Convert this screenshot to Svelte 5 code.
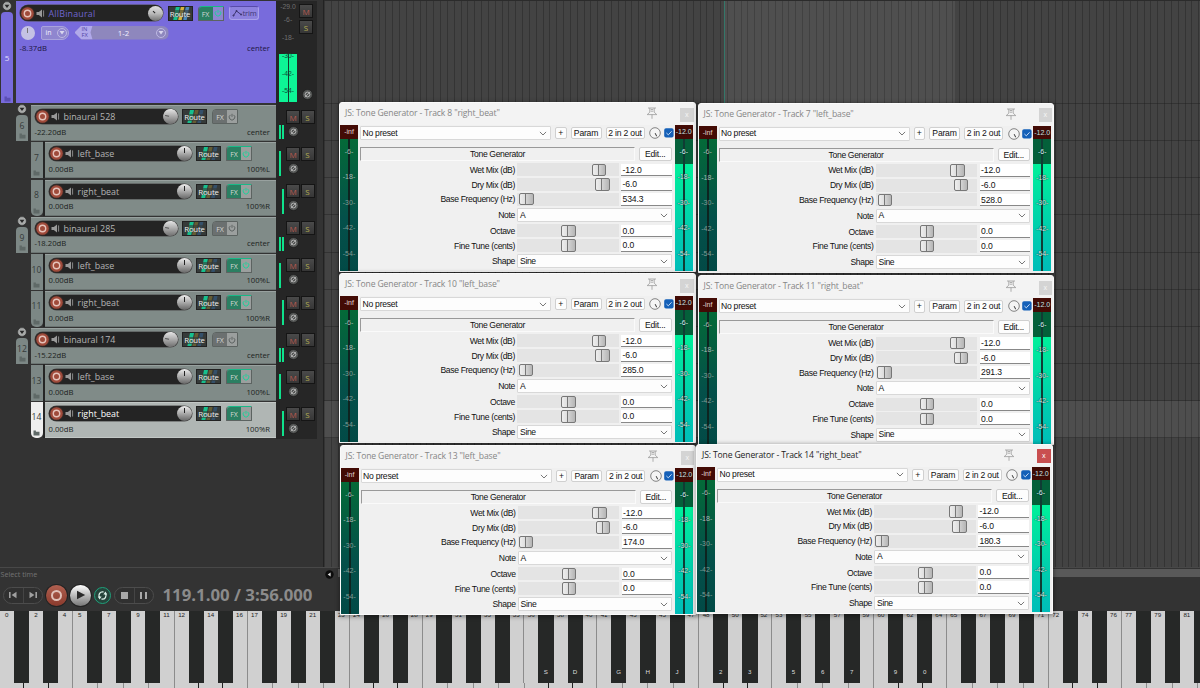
<script>
  const tracks = [
    { num: 6, name: "binaural 528", db: "-22.20dB", pan: "center", folder: true },
    { num: 7, name: "left_base", db: "0.00dB", pan: "100%L" },
    { num: 8, name: "right_beat", db: "0.00dB", pan: "100%R", last: true },
    { num: 9, name: "binaural 285", db: "-18.20dB", pan: "center", folder: true },
    { num: 10, name: "left_base", db: "0.00dB", pan: "100%L" },
    { num: 11, name: "right_beat", db: "0.00dB", pan: "100%R", last: true },
    { num: 12, name: "binaural 174", db: "-15.22dB", pan: "center", folder: true },
    { num: 13, name: "left_base", db: "0.00dB", pan: "100%L" },
    { num: 14, name: "right_beat", db: "0.00dB", pan: "100%R", last: true, selected: true }
  ];

  const windows = [
    { track: 8, name: "right_beat", freq: "534.3", knob: 9.5, x: 339, y: 102 },
    { track: 7, name: "left_base", freq: "528.0", knob: 9.5, x: 697.5, y: 102.6 },
    { track: 10, name: "left_base", freq: "285.0", knob: 9, x: 339, y: 273 },
    { track: 11, name: "right_beat", freq: "291.3", knob: 9, x: 697.5, y: 275.4 },
    { track: 13, name: "left_base", freq: "174.0", knob: 8.5, x: 339.6, y: 445 },
    { track: 14, name: "right_beat", freq: "180.3", knob: 8, x: 696, y: 443.8, active: true }
  ];

  function paramsFor(win) {
    return [
      { label: "Wet Mix (dB)", value: "-12.0", knob: 82 },
      { label: "Dry Mix (dB)", value: "-6.0", knob: 85.5 },
      { label: "Base Frequency (Hz)", value: win.freq, knob: win.knob },
      { label: "Note", option: "A" },
      { label: "Octave", value: "0.0", knob: 51.5 },
      { label: "Fine Tune (cents)", value: "0.0", knob: 51.5 },
      { label: "Shape", option: "Sine" }
    ];
  }

  const ticks = ["-6-", "-18-", "-30-", "-42-", "-54-"];

  // computer keyboard letters shown on the black keys
  const keyHints = { 37: "S", 39: "D", 42: "G", 44: "H", 46: "J", 49: "2", 51: "3", 54: "5", 56: "6", 58: "7", 61: "9", 63: "0" };
  const blackNotes = [1, 3, 6, 8, 10];
  const notes = Array.from({ length: 83 }, (_, n) => ({
    n,
    black: blackNotes.includes(n % 12),
    edge: n % 12 === 4 || n % 12 === 11
  }));
  const octaves = [0, 1, 2, 3, 4, 5, 6];
</script>

{#snippet recordArm()}
  <svg class="rec" width="15" height="15" viewBox="0 0 15 15">
    <circle cx="7.5" cy="7.5" r="7.2" fill="#3a2a27" />
    <circle cx="7.5" cy="7.5" r="6.3" fill="#a04b3b" />
    <circle cx="7.5" cy="7.5" r="3.2" fill="none" stroke="#e6c3bb" stroke-width="1.4" />
  </svg>
{/snippet}

{#snippet speaker()}
  <svg class="speaker" width="10" height="9" viewBox="0 0 10 9">
    <path d="M0.5 3h2.3L6 0.6v7.8L2.8 6H0.5z" fill="#999" />
    <path d="M7.6 1.4v6.2" stroke="#888" stroke-width="1" />
  </svg>
{/snippet}

{#snippet phase()}
  <svg class="phase" width="11" height="11" viewBox="0 0 11 11">
    <circle cx="5.5" cy="5.5" r="5" fill="#555756" stroke="#181818" stroke-width="0.6" />
    <circle cx="5.5" cy="5.5" r="2.4" fill="none" stroke="#b8b8b8" stroke-width="0.9" />
    <path d="M2.8 8.2L8.2 2.8" stroke="#b8b8b8" stroke-width="0.8" />
  </svg>
{/snippet}

{#snippet fold()}
  <svg class="fold" width="10" height="10" viewBox="0 0 10 10">
    <circle cx="5" cy="5" r="4.4" fill="#a9abaa" stroke="#2c2c2c" stroke-width="0.6" />
    <path d="M2.6 3.7h4.8L5 7z" fill="#262626" />
  </svg>
{/snippet}

{#snippet folderGlyph()}
  <svg class="folder-glyph" width="7" height="6" viewBox="0 0 7 6">
    <path d="M0.5 0.5h2.4v1.2h3.6v3.8h-6z" fill="currentColor" />
  </svg>
{/snippet}

{#snippet route(lit)}
  <div class="route">
    <svg width="25" height="15" viewBox="0 0 25 15">
      <path d="M7 0h4L8 15H4z" fill="#17c08d" />
      <path d="M12 0h3.5l-3 15H9z" fill={lit ? "#d6b43c" : "#655c33"} />
      <path d="M17 0h3.5l-3 15H14z" fill={lit ? "#4c88bb" : "#34506a"} />
      <path d="M2 4h21v7H2z" fill="#353a39" opacity="0.6" />
    </svg>
    <span>Route</span>
  </div>
{/snippet}

{#snippet fx(on)}
  <div class="fx" class:on>
    <span class="fx-text">FX</span>
    <span class="fx-power">
      <svg width="8" height="8" viewBox="0 0 8 8" fill="none" stroke="currentColor" stroke-width="1">
        <path d="M2.4 1.9a2.8 2.8 0 1 0 3.2 0M4 0.8v3" />
      </svg>
    </span>
  </div>
{/snippet}

{#snippet meter(text, lit)}
  <div class="meter" class:lit>
    <div class="peak">{text}</div>
    <div class="meter-body">
      {#each ticks as tick}
        <span>{tick}</span>
      {/each}
    </div>
  </div>
{/snippet}

{#snippet chevron()}
  <svg class="chevron" width="8" height="5" viewBox="0 0 8 5">
    <path d="M0.9 0.9L4 4L7.1 0.9" fill="none" stroke="#555" stroke-width="0.8" />
  </svg>
{/snippet}

<div class="app">
  <div class="main">
    <div class="tcp">
      <div class="master-row">
        <div class="bus-gutter">
          {@render fold()}
          <div class="bus-num"><span>5</span>{@render folderGlyph()}</div>
        </div>
        <div class="bus">
          <div class="line">
            <div class="name-pill">
              {@render recordArm()}
              {@render speaker()}
              <span class="name">AllBinaural</span>
              <i class="knob tilt"></i>
            </div>
            {@render route(true)}
            {@render fx(true)}
            <div class="trim">
              <svg width="11" height="8" viewBox="0 0 11 8" fill="none" stroke="#3e3772" stroke-width="1">
                <path d="M1.5 6.5L4.5 2L9 5.5" />
                <path d="M1 6h1v1H1zM4 1.5h1v1H4zM8.6 5h1v1h-1z" />
              </svg>
              <span>trim</span>
            </div>
          </div>
          <div class="line second">
            <i class="knob pale"></i>
            <div class="in">in <b><svg width="6" height="5" viewBox="0 0 6 5"><path d="M0.5 1h5L3 4.4z" fill="#d9d6ee" /></svg></b></div>
            <div class="infx">
              <span class="infx-tag">IN<br />FX</span>
              <span class="infx-body">1-2</span>
              <b><svg width="6" height="5" viewBox="0 0 6 5"><path d="M0.5 1h5L3 4.4z" fill="#d9d6ee" /></svg></b>
            </div>
          </div>
          <div class="values"><span>-8.37dB</span><span>center</span></div>
        </div>
        <div class="strip master-strip">
          <div class="vu">
            <span>-29.0</span><span>-6-</span><span>-18-</span>
            <div class="vu-lit"><span>-30-</span><span>-42-</span><span>-54-</span></div>
          </div>
          <div class="strip-buttons">
            <div class="ms m">M</div>
            <div class="ms s">S</div>
            {@render phase()}
          </div>
        </div>
      </div>

      {#each tracks as track}
        <div class="track" class:child={!track.folder} class:selected={track.selected}>
          <div class="gutter" class:last={track.last}>
            {#if track.folder}{@render fold()}{/if}
            <div class="num"><span>{track.num}</span>{@render folderGlyph()}</div>
          </div>
          <div class="body">
            <div class="line">
              <div class="name-pill">
                {@render recordArm()}
                {@render speaker()}
                <span class="name">{track.name}</span>
                <i class="knob" class:left={track.folder}></i>
              </div>
              {@render route(false)}
              {@render fx(!track.folder)}
            </div>
            <div class="values"><span>{track.db}</span><span>{track.pan}</span></div>
          </div>
          <div class="strip">
            <div class="bars" class:short={track.folder}>
              <i class:off={track.last}></i>
              <i class:off={!track.folder && !track.last}></i>
            </div>
            <div class="strip-grid">
              <div class="ms m">M</div>
              <div class="ms s">S</div>
              {@render phase()}
            </div>
          </div>
        </div>
      {/each}
    </div>

    <div class="arrange">
      <div class="lane first"><div class="range"></div></div>
      {#each tracks as track}
        <div class="lane" class:selected={track.selected}></div>
      {/each}
    </div>
  </div>

  <div class="transport">
    <div class="status">
      <span>Select time</span>
      <svg width="9" height="9" viewBox="0 0 9 9">
        <circle cx="4.5" cy="4.5" r="4.2" fill="#0c0c0c" />
        <path d="M5.6 2.5v4L2.7 4.5z" fill="#ddd" />
      </svg>
      <i class="scroll"></i>
    </div>
    <div class="controls">
      <div class="pair">
        <span><svg width="10" height="8" viewBox="0 0 10 8"><path d="M1 1h1.6v6H1zM8.5 0.8v6.4L3.6 4z" fill="#a0a0a0" /></svg></span>
        <span><svg width="10" height="8" viewBox="0 0 10 8"><path d="M7.4 1H9v6H7.4zM1.5 0.8v6.4L6.4 4z" fill="#a0a0a0" /></svg></span>
      </div>
      <div class="round record"><i></i></div>
      <div class="round play"><svg width="10" height="10" viewBox="0 0 10 10"><path d="M1 0.8v8.4L9.2 5z" fill="#2a2a2a" /></svg></div>
      <div class="loop">
        <svg width="11" height="11" viewBox="0 0 11 11">
          <path d="M2.5 7.6A3.7 3.7 0 0 1 6.5 2M8.5 3.4A3.7 3.7 0 0 1 4.5 9" fill="none" stroke="#d9efe7" stroke-width="1.4" />
          <path d="M0.8 6.6h3.8L2.6 9.6zM6.4 4.4h3.8L8.4 1.4z" fill="#d9efe7" />
        </svg>
      </div>
      <div class="pair">
        <span><i class="stop"></i></span>
        <span><i class="pause"></i></span>
      </div>
      <div class="time">119.1.00 / 3:56.000</div>
    </div>
  </div>

  <div class="piano">
    <div class="keys-top">
      {#each notes as note}
        <div class="key" class:black={note.black} class:edge={note.edge}>
          {#if note.black}{keyHints[note.n] ?? ""}{:else}{note.n}{/if}
        </div>
      {/each}
    </div>
    <div class="keys-bottom">
      {#each octaves as o}
        <div class="low three"></div>
        <div class="low three"></div>
        <div class="low three"></div>
        <div class="low"></div>
        <div class="low"></div>
        <div class="low"></div>
        <div class="low"></div>
      {/each}
    </div>
  </div>

  {#each windows as win}
    <div class="window" class:active={win.active} style="left: {win.x}px; top: {win.y}px">
      <div class="titlebar">
        <span class="title">JS: Tone Generator - Track {win.track} "{win.name}"</span>
        <svg class="pin" width="12" height="13" viewBox="0 0 12 13" fill="none" stroke="#9a9a9a" stroke-width="0.8">
          <path d="M2 1h8M3.8 1v4.2L1.2 7.6h9.6L8.2 5.2V1M6 7.6v4.2M4.8 2.5h2.4M4.8 4.2h2.4" />
        </svg>
        <span class="close">x</span>
      </div>
      <div class="content">
        {@render meter("-inf", false)}
        <div class="panel">
          <div class="toolbar">
            <div class="combo preset">No preset{@render chevron()}</div>
            <div class="btn plus">+</div>
            <div class="btn param">Param</div>
            <div class="btn io">2 in 2 out</div>
            <svg class="mix" width="12" height="12" viewBox="0 0 12 12" fill="none">
              <circle cx="6" cy="6" r="5.3" fill="#f5f5f5" stroke="#666" stroke-width="0.8" />
              <path d="M6.2 6.2L7.7 9.3" stroke="#333" stroke-width="1" />
            </svg>
            <svg class="check" width="10" height="10" viewBox="0 0 10 10">
              <rect x="0.2" y="0.2" width="9.4" height="9.4" rx="1.8" fill="#1460b8" />
              <path d="M2.4 5l1.9 1.8L7.6 3.3" fill="none" stroke="#d8e8fa" stroke-width="0.9" />
            </svg>
          </div>
          <div class="heading">
            <div class="effect">Tone Generator</div>
            <div class="btn edit">Edit...</div>
          </div>
          {#each paramsFor(win) as p}
            {#if p.option}
              <div class="row select-row">
                <span class="label">{p.label}</span>
                <div class="combo">{p.option}{@render chevron()}</div>
              </div>
            {:else}
              <div class="row">
                <span class="label">{p.label}</span>
                <div class="slider"><i style="margin-left: {p.knob - 7.2}px"></i></div>
                <div class="field">{p.value}</div>
              </div>
            {/if}
          {/each}
        </div>
        {@render meter("-12.0", true)}
      </div>
    </div>
  {/each}
</div>

<style>
  :global(body) {
    background: #333;
  }

  * {
    box-sizing: border-box;
  }

  .app {
    position: relative;
    width: 1200px;
    height: 688px;
    overflow: hidden;
    background: #333;
    font-family: "Open Sans", "Liberation Sans", sans-serif;
    font-size: 8px;
  }

  svg {
    display: block;
    flex: none;
  }

  .main {
    display: flex;
    height: 568px;
    border-bottom: 1px solid #484848;
  }

  .tcp {
    width: 323px;
    flex: none;
    padding-top: 1px;
  }

  .line {
    display: flex;
    align-items: center;
  }

  .master-row {
    display: flex;
    height: 103.3px;
  }

  .bus-gutter {
    width: 16px;
    padding-left: 1px;
    display: flex;
    flex-direction: column;
    align-items: flex-start;
  }

  .bus-gutter .fold {
    margin-left: 1px;
  }

  .bus-num {
    flex: 1;
    width: 12px;
    margin: 1px 0 1px;
    border-radius: 4px 4px 0 0;
    background: #786bdc;
    color: #e2ddff;
    display: flex;
    flex-direction: column;
    align-items: center;
    justify-content: flex-end;
    padding-bottom: 1px;
  }

  .bus-num span {
    margin-bottom: 33px;
  }

  .bus-num .folder-glyph {
    color: #5b4fb4;
  }

  .bus {
    width: 260px;
    height: 102px;
    background: #786bdc;
    padding: 3.5px 6px 0 3.5px;
  }

  .bus .line {
    height: 17px;
  }

  .name-pill {
    width: 144px;
    height: 16px;
    border-radius: 8px;
    background: #242424;
    display: flex;
    align-items: center;
    color: #b4b4b4;
    font-size: 8.9px;
    box-shadow: 0 0 0 0.6px #4b4b4b;
  }

  .name-pill .speaker {
    margin-left: 1.5px;
  }

  .name {
    flex: 1;
    margin-left: 2.5px;
    white-space: nowrap;
  }

  .bus .name {
    color: #6f64cf;
    letter-spacing: 0.2px;
  }

  .bus .name-pill {
    width: 143px;
    margin-right: 5px;
  }

  .knob {
    width: 15px;
    height: 15px;
    flex: none;
    border-radius: 50%;
    background: linear-gradient(#eee, #aaa 50%, #666);
    display: flex;
    justify-content: center;
  }

  .knob::after {
    content: "";
    width: 1px;
    height: 5px;
    margin-top: 2px;
    background: #222;
  }

  .knob.left {
    transform: rotate(-80deg);
    background: linear-gradient(80deg, #666, #aaa 50%, #eee);
    background: linear-gradient(100deg, #eee -60%, #aaa 50%, #666 160%);
    background: linear-gradient(260deg, #eee, #aaa 50%, #666);
    background: linear-gradient(260deg, #eee, #aaa 50%, #666);
  }

  .knob.left::after {
    height: 4px;
    background: #555;
  }

  .knob.tilt {
    transform: rotate(-45deg);
    background: linear-gradient(225deg, #eee, #bbb 50%, #555);
  }

  .knob.tilt::after {
    height: 3px;
    margin-top: 3.5px;
  }

  .knob.pale {
    width: 14px;
    height: 14px;
    background: #c5c2e4;
  }

  .knob.pale::after {
    background: #777;
  }

  .route {
    position: relative;
    width: 25px;
    height: 15px;
    background: #353a39;
    border: 0.5px solid #222;
    overflow: hidden;
  }

  .route span {
    position: absolute;
    inset: 0;
    line-height: 14px;
    text-align: center;
    color: #eee;
    font-size: 7.8px;
    letter-spacing: -0.2px;
  }

  .route svg {
    margin-top: -0.5px;
  }

  .fx {
    width: 26px;
    height: 15px;
    margin-left: 5px;
    display: flex;
    color: #d7d7d7;
    font-size: 7px;
    line-height: 15px;
    text-align: center;
    border: 0.6px solid #5c6361;
    border-radius: 4px 1px 1px 1px;
    overflow: hidden;
  }

  .fx-text {
    width: 14px;
    background: #6b7070;
  }

  .fx-power {
    flex: 1;
    background: #9b9f9e;
    color: #5e6463;
    display: flex;
    align-items: center;
    justify-content: center;
  }

  .fx.on {
    border-top: 1px solid #19b988;
  }

  .fx.on .fx-text {
    background: #2b7f62;
  }

  .fx.on .fx-power {
    color: #1fd19b;
  }

  .bus .fx-power {
    background: #8e86cf;
  }

  .trim {
    width: 30px;
    height: 14px;
    margin-left: 5px;
    border: 1px solid #aaa2ea;
    border-top-color: #574ba9;
    border-radius: 3px;
    background: #8d82de;
    color: #403873;
    font-size: 7.6px;
    letter-spacing: -0.2px;
    display: flex;
    align-items: center;
    padding-left: 2px;
  }

  .bus .second {
    height: 16px;
    margin-top: 3px;
    padding-left: 1px;
  }

  .in {
    width: 28px;
    height: 14px;
    margin-left: 6px;
    padding-left: 4px;
    border: 1px solid #a9a3dc;
    border-radius: 2px 7px 7px 2px;
    background: #8f86cf;
    color: #f0eeff;
    font-size: 7px;
    display: flex;
    align-items: center;
    justify-content: space-between;
  }

  .second b {
    width: 10px;
    height: 10px;
    margin-right: 1px;
    border: 1px solid #bdb8e2;
    border-radius: 50%;
    display: flex;
    align-items: center;
    justify-content: center;
  }

  .infx {
    width: 94px;
    height: 14px;
    margin-left: 6px;
    padding-right: 2px;
    border-radius: 0 7px 7px 0;
    background: #8e87bd;
    color: #f2f0ff;
    display: flex;
    align-items: center;
    clip-path: polygon(7px 0, 100% 0, 100% 100%, 7px 100%, 0 50%);
  }

  .infx-tag {
    width: 18px;
    height: 14px;
    padding-left: 7px;
    background: #b1a9ea;
    color: #5347a8;
    font-size: 5.8px;
    line-height: 6.6px;
    clip-path: polygon(0 0, 100% 0, 16px 50%, 100% 100%, 0 100%);
  }

  .infx-body {
    flex: 1;
    text-align: center;
    font-size: 7.8px;
    padding-right: 1px;
  }

  .values {
    display: flex;
    justify-content: space-between;
    font-size: 7.7px;
    line-height: 10px;
    color: #1c1f1e;
  }

  .bus .values {
    margin-top: 2.5px;
    color: #1d1644;
  }

  .strip {
    width: 41px;
    background: #262626;
    display: flex;
  }

  .master-strip {
    padding-left: 3px;
  }

  .vu {
    width: 18px;
    display: flex;
    flex-direction: column;
    align-items: center;
    color: #707070;
    font: 6.8px "Liberation Sans", sans-serif;
  }

  .vu span {
    line-height: 17.6px;
    white-space: nowrap;
  }

  .vu > span:first-child {
    line-height: 12px;
  }

  .vu > span:nth-child(2) {
    line-height: 14px;
  }

  .vu > span:nth-child(3) {
    line-height: 22px;
  }

  .vu-lit {
    width: 18px;
    height: 48px;
    margin-top: 5px;
    background: linear-gradient(90deg, #0df596 8.5px, #123c2b 8.5px, #123c2b 9.5px, #0df596 9.5px);
    color: #104c35;
    display: flex;
    flex-direction: column;
    align-items: center;
  }

  .vu-lit span:first-child {
    margin-top: -7px;
  }

  .strip-buttons {
    flex: 1;
    padding: 2.5px 0 0 2px;
    display: flex;
    flex-direction: column;
    gap: 2px;
  }

  .strip-buttons .phase {
    margin: 53px 0 0 2.5px;
  }

  .ms {
    width: 14px;
    height: 14px;
    border: 0.6px solid #151515;
    background: linear-gradient(#4a4a4a, #363636);
    font-size: 8px;
    line-height: 13px;
    text-align: center;
  }

  .m {
    color: #bb5a50;
  }

  .s {
    color: #b3ad52;
  }

  .track {
    display: flex;
    height: 37.15px;
    padding-left: 16px;
  }

  .gutter {
    width: 15px;
    height: 37px;
    display: flex;
    flex-direction: column;
  }

  .gutter .fold {
    margin-left: 1px;
  }

  .num {
    flex: 1;
    width: 12px;
    border-radius: 4px 4px 0 0;
    background: #7c8785;
    color: #353a39;
    display: flex;
    flex-direction: column;
    align-items: center;
    justify-content: flex-end;
    gap: 1px;
    padding-bottom: 2px;
    margin-top: 1px;
  }

  .num span {
    font-size: 8.6px;
    line-height: 11px;
  }

  .num .folder-glyph {
    color: #5f6967;
  }

  .track.child {
    padding-left: 30.5px;
  }

  .child .gutter {
    width: 14.5px;
    border-right: 2.5px solid #252525;
  }

  .child .num {
    border-radius: 0;
    gap: 6px;
  }

  .child .last .num {
    border-radius: 0 0 5px 5px;
    gap: 7px;
  }

  .body {
    width: 245px;
    height: 36px;
    margin-top: 1px;
    border-top: 1px solid #98a19f;
    border-bottom: 1px solid #6b7472;
    background: #808b88;
    padding: 3px 6px 0 3.5px;
  }

  .child .body {
    width: 231px;
  }

  .body .name-pill {
    width: 143px;
    margin-right: 4.5px;
    height: 15px;
  }

  .body .values {
    margin-top: 2.5px;
  }

  .selected .body {
    background: #b0b6b4;
    border-color: #c3c8c6;
  }

  .selected .num {
    background: #eee;
  }

  .selected .name {
    color: #fff;
  }

  .bars {
    width: 6px;
    height: 25px;
    margin: 10px 0 0 3px;
    display: flex;
    gap: 1px;
  }

  .bars.short {
    height: 14px;
    margin-top: 21px;
  }

  .bars i {
    width: 2px;
    background: #0fe28c;
  }

  .bars i.off {
    visibility: hidden;
  }

  .strip-grid {
    margin: 5.5px 0 0 1px;
    display: grid;
    grid-template: 14px 13px / 14.5px 14.5px;
  }

  .strip-grid .phase {
    margin: 2px 0 0 2px;
  }

  .arrange {
    flex: 1;
    background: repeating-linear-gradient(90deg, #343434 0, #343434 1px, #434343 1px, #434343 6.83px);
    border-left: 0.5px solid #222;
  }

  .lane {
    height: 37.15px;
    border-bottom: 1px solid rgba(28, 28, 28, 0.4);
  }

  .lane.first {
    height: 104px;
    border-top: 1px solid #2b2b2b;
    padding-left: 399.5px;
  }

  .lane.selected {
    background: rgba(255, 255, 255, 0.06);
  }

  .range {
    width: 231px;
    height: 103px;
    border-left: 1px solid #34786a;
    background: rgba(255, 255, 255, 0.065);
  }

  .transport {
    height: 43px;
  }

  .status {
    display: flex;
    align-items: center;
    height: 12px;
    color: #747474;
    font-size: 7.2px;
  }

  .status span {
    width: 324.5px;
    padding-left: 0.5px;
  }

  .scroll {
    flex: 1;
    height: 8px;
    margin: -3px 0 0 4px;
    background: #595959;
  }

  .controls {
    display: flex;
    align-items: center;
    height: 30px;
    padding-left: 3px;
  }

  .pair {
    width: 40px;
    height: 17px;
    border: 1px solid #4c4c4c;
    border-radius: 9px;
    background: #303030;
    display: flex;
  }

  .pair span {
    flex: 1;
    display: flex;
    align-items: center;
    justify-content: center;
  }

  .pair span + span {
    border-left: 1px solid #454545;
  }

  .round {
    width: 21px;
    height: 21px;
    border-radius: 50%;
    display: flex;
    align-items: center;
    justify-content: center;
    box-shadow: 0 0 0 1px #222;
  }

  .record {
    margin-left: 3px;
    background: linear-gradient(#b06050, #8a3a2c);
  }

  .record i {
    width: 11px;
    height: 11px;
    border: 2px solid #e0c0b8;
    border-radius: 50%;
  }

  .play {
    margin-left: 3px;
    padding-left: 1px;
    background: linear-gradient(#fff, #bbb 50%, #777);
  }

  .loop {
    width: 17px;
    height: 17px;
    margin: 0 3px;
    border: 1.3px solid #1fa17b;
    border-radius: 50%;
    background: #25443b;
    display: flex;
    align-items: center;
    justify-content: center;
  }

  .stop {
    width: 7px;
    height: 7px;
    background: #a8a8a8;
  }

  .pause {
    width: 7px;
    height: 7px;
    border: solid #a8a8a8;
    border-width: 0 2.4px;
  }

  .time {
    margin-left: 8.5px;
    color: #8b8b8b;
    font-size: 16.8px;
    font-weight: 700;
    line-height: 24px;
    white-space: nowrap;
  }

  .piano {
    height: 77px;
    background: #d0d0d0;
    overflow: hidden;
  }

  .keys-top {
    display: flex;
    height: 72px;
  }

  .key {
    width: 14.573px;
    flex: none;
    padding-right: 1px;
    color: #222;
    font: 6.2px/8px "Liberation Sans", sans-serif;
    text-align: center;
    background: #d0d0d0;
  }

  .key.edge {
    border-right: 1px solid #8c8c8c;
  }

  .key.black {
    width: 15.773px;
    margin: 0 -0.6px;
    background: #262827;
    box-shadow: 1.5px 0 0 #b0b0b0;
    color: #ddd;
    padding-top: 57px;
  }

  .keys-bottom {
    display: flex;
    height: 5px;
  }

  .low {
    width: 25.503px;
    flex: none;
    border-right: 1px solid #8c8c8c;
  }

  .low.three {
    width: 24.288px;
  }

  .low.three:nth-child(7n + 1),
  .low.three:nth-child(7n + 2) {
    border-right-color: #222;
  }

  .window {
    position: absolute;
    width: 356.5px;
    height: 170px;
    border: 1px solid #fafafa;
    border-radius: 3px 3px 0 0;
    background: #f0f0f0;
    box-shadow: 0 1px 4px 1px rgba(0, 0, 0, 0.35);
    color: #111;
    font: 8.6px "Liberation Sans", sans-serif;
    letter-spacing: -0.35px;
  }

  .titlebar {
    height: 22px;
    display: flex;
    background: #f3f3f3;
    font: 8.6px/20px "Open Sans", sans-serif;
    letter-spacing: -0.14px;
    padding-left: 5px;
    color: #868686;
  }

  .active .titlebar {
    color: #1c1c1c;
  }

  .title {
    width: 301px;
    white-space: nowrap;
  }

  .pin {
    margin-top: 4px;
  }

  .close {
    width: 13.5px;
    height: 14px;
    margin: 4.5px 0 0 22px;
    background: #d4d4d4;
    color: #f5f5f5;
    font-size: 7px;
    line-height: 13px;
    text-align: center;
  }

  .active .close {
    background: #c94f50;
    color: #fff;
  }

  .content {
    display: flex;
    height: 145.5px;
    padding-right: 1.8px;
  }

  .meter {
    width: 18px;
    flex: none;
    color: #a9b8b3;
    font-size: 7px;
    letter-spacing: 0;
    text-align: center;
    white-space: nowrap;
  }

  .peak {
    height: 13.5px;
    line-height: 13px;
    background: #430b05;
    color: #e0d5d3;
  }

  .meter-body {
    height: 132px;
    display: flex;
    flex-direction: column;
    background:
      linear-gradient(90deg, transparent 8.4px, #0d2420 8.4px, #0d2420 9.8px, transparent 9.8px),
      linear-gradient(#046a38, #04504a 60%, #024a46);
  }

  .meter-body span {
    line-height: 25.5px;
  }

  .meter-body span:nth-child(n + 3) {
    color: #809a95;
  }

  .meter.lit {
    color: #eafff8;
    text-shadow: 0 0 1px #033, 0 0 1px #033;
  }

  .lit .meter-body {
    background:
      linear-gradient(90deg, transparent 8.4px, #103c34 8.4px, #103c34 9.8px, transparent 9.8px),
      linear-gradient(#04603a 25px, #00f09a 25px, #00d0ac 65%, #00bdb9);
  }

  .lit .meter-body span {
    color: #d8f4ec;
  }

  .panel {
    flex: 1;
    min-width: 0;
    padding: 1px 3.2px 0 2px;
  }

  .toolbar {
    display: flex;
    align-items: center;
    height: 14px;
    margin-right: -3px;
    white-space: nowrap;
  }

  .combo {
    flex: 1;
    height: 14px;
    border: 1px solid #d8d8d8;
    border-radius: 1px;
    background: #fdfdfd;
    padding: 0 3px 0 2px;
    line-height: 13px;
    display: flex;
    align-items: center;
    justify-content: space-between;
  }

  .preset {
    flex: none;
    width: 191px;
    padding-left: 1.5px;
    letter-spacing: -0.25px;
  }

  .btn {
    height: 12.5px;
    border: 1px solid #d0d0d0;
    border-radius: 2px;
    background: #fdfdfd;
    line-height: 11px;
    text-align: center;
    letter-spacing: -0.2px;
  }

  .plus {
    width: 11.5px;
    margin-left: 4px;
  }

  .param {
    width: 31px;
    margin-left: 4px;
  }

  .io {
    width: 39px;
    margin-left: 4px;
  }

  .mix {
    margin-left: 4.5px;
  }

  .check {
    margin-left: 2.5px;
  }

  .heading {
    height: 22.5px;
    display: flex;
    justify-content: space-between;
    padding-top: 7px;
  }

  .effect {
    width: 275px;
    height: 14px;
    border: 1px solid #999;
    border-right-color: #fafafa;
    border-bottom-color: #fafafa;
    line-height: 13px;
    text-align: center;
  }

  .edit {
    width: 32.5px;
    height: 13.5px;
    line-height: 12px;
  }

  .row {
    height: 14.7px;
    display: flex;
    align-items: center;
  }

  .select-row {
    height: 17px;
  }

  .label {
    width: 155px;
    margin-right: 2px;
    text-align: right;
    white-space: nowrap;
  }

  .slider {
    width: 101.5px;
    height: 13px;
    background: #e4e4e4;
    display: flex;
    align-items: center;
  }

  .slider i {
    width: 14.4px;
    height: 12.4px;
    border: 1px solid #777;
    border-radius: 2px;
    background: linear-gradient(90deg, #eee 0, #ddd 5.5px, #777 5.5px, #777 6.5px, #d2d2d2 6.5px, #b5b5b5);
  }

  .field {
    flex: 1;
    height: 12.6px;
    margin-left: 2.5px;
    padding-left: 1.5px;
    border-bottom: 1px solid #888;
    background: #fff;
    line-height: 12px;
    letter-spacing: -0.1px;
  }
</style>
